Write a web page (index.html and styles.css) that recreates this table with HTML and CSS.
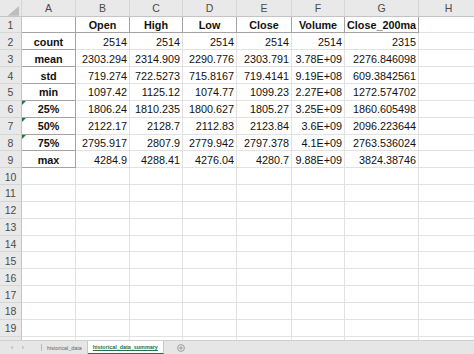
FILE: index.html
```html
<!DOCTYPE html>
<html>
<head>
<meta charset="utf-8">
<link rel="stylesheet" href="styles.css">
</head>
<body>
<div class="app">
  <div class="sheet">
    <div class="hd corner"><svg width="22" height="17" viewBox="0 0 22 17"><polygon points="20,6 20,16 8,16" fill="#bdbdbd"/></svg></div>
    <div class="hd">A</div><div class="hd">B</div><div class="hd">C</div><div class="hd">D</div><div class="hd">E</div><div class="hd">F</div><div class="hd">G</div><div class="hd">H</div>

    <div class="rh">1</div><div class="c a1"></div><div class="c b t">Open</div><div class="c b t">High</div><div class="c b t">Low</div><div class="c b t">Close</div><div class="c b t">Volume</div><div class="c b t">Close_200ma</div><div class="c"></div>

    <div class="rh">2</div><div class="c b t">count</div><div class="c n">2514</div><div class="c n">2514</div><div class="c n">2514</div><div class="c n">2514</div><div class="c n">2514</div><div class="c n">2315</div><div class="c"></div>

    <div class="rh">3</div><div class="c b t">mean</div><div class="c n">2303.294</div><div class="c n">2314.909</div><div class="c n">2290.776</div><div class="c n">2303.791</div><div class="c n">3.78E+09</div><div class="c n">2276.846098</div><div class="c"></div>

    <div class="rh">4</div><div class="c b t">std</div><div class="c n">719.274</div><div class="c n">722.5273</div><div class="c n">715.8167</div><div class="c n">719.4141</div><div class="c n">9.19E+08</div><div class="c n">609.3842561</div><div class="c"></div>

    <div class="rh">5</div><div class="c b t">min</div><div class="c n">1097.42</div><div class="c n">1125.12</div><div class="c n">1074.77</div><div class="c n">1099.23</div><div class="c n">2.27E+08</div><div class="c n">1272.574702</div><div class="c"></div>

    <div class="rh">6</div><div class="c b t warn">25%</div><div class="c n">1806.24</div><div class="c n">1810.235</div><div class="c n">1800.627</div><div class="c n">1805.27</div><div class="c n">3.25E+09</div><div class="c n">1860.605498</div><div class="c"></div>

    <div class="rh">7</div><div class="c b t warn">50%</div><div class="c n">2122.17</div><div class="c n">2128.7</div><div class="c n">2112.83</div><div class="c n">2123.84</div><div class="c n">3.6E+09</div><div class="c n">2096.223644</div><div class="c"></div>

    <div class="rh">8</div><div class="c b t warn">75%</div><div class="c n">2795.917</div><div class="c n">2807.9</div><div class="c n">2779.942</div><div class="c n">2797.378</div><div class="c n">4.1E+09</div><div class="c n">2763.536024</div><div class="c"></div>

    <div class="rh">9</div><div class="c b t">max</div><div class="c n">4284.9</div><div class="c n">4288.41</div><div class="c n">4276.04</div><div class="c n">4280.7</div><div class="c n">9.88E+09</div><div class="c n">3824.38746</div><div class="c"></div>

    <div class="rh">10</div><div class="c"></div><div class="c"></div><div class="c"></div><div class="c"></div><div class="c"></div><div class="c"></div><div class="c"></div><div class="c"></div>
    <div class="rh">11</div><div class="c"></div><div class="c"></div><div class="c"></div><div class="c"></div><div class="c"></div><div class="c"></div><div class="c"></div><div class="c"></div>
    <div class="rh">12</div><div class="c"></div><div class="c"></div><div class="c"></div><div class="c"></div><div class="c"></div><div class="c"></div><div class="c"></div><div class="c"></div>
    <div class="rh">13</div><div class="c"></div><div class="c"></div><div class="c"></div><div class="c"></div><div class="c"></div><div class="c"></div><div class="c"></div><div class="c"></div>
    <div class="rh">14</div><div class="c"></div><div class="c"></div><div class="c"></div><div class="c"></div><div class="c"></div><div class="c"></div><div class="c"></div><div class="c"></div>
    <div class="rh">15</div><div class="c"></div><div class="c"></div><div class="c"></div><div class="c"></div><div class="c"></div><div class="c"></div><div class="c"></div><div class="c"></div>
    <div class="rh">16</div><div class="c"></div><div class="c"></div><div class="c"></div><div class="c"></div><div class="c"></div><div class="c"></div><div class="c"></div><div class="c"></div>
    <div class="rh">17</div><div class="c"></div><div class="c"></div><div class="c"></div><div class="c"></div><div class="c"></div><div class="c"></div><div class="c"></div><div class="c"></div>
    <div class="rh">18</div><div class="c"></div><div class="c"></div><div class="c"></div><div class="c"></div><div class="c"></div><div class="c"></div><div class="c"></div><div class="c"></div>
    <div class="rh">19</div><div class="c"></div><div class="c"></div><div class="c"></div><div class="c"></div><div class="c"></div><div class="c"></div><div class="c"></div><div class="c"></div>
    <div class="rh"></div><div class="c"></div><div class="c"></div><div class="c"></div><div class="c"></div><div class="c"></div><div class="c"></div><div class="c"></div><div class="c"></div>
  </div>
  <div class="tabs">
    <span class="nav"><svg width="30" height="13" viewBox="0 0 30 13"><polygon points="13,4.5 13,8.5 10.5,6.5" fill="#c4c4c4"/><polygon points="22,4.5 22,8.5 24.5,6.5" fill="#c4c4c4"/></svg></span>
    <span class="sep"></span>
    <span class="tab">historical_data</span>
    <span class="tab active">historical_data_summary</span>
    <span class="add"><svg width="8" height="8" viewBox="0 0 8 8"><circle cx="4" cy="4" r="3.4" fill="none" stroke="#8a8a8a" stroke-width="0.8"/><path d="M4 2.2V5.8M2.2 4H5.8" stroke="#8a8a8a" stroke-width="0.8"/></svg></span>
  </div>
</div>
</body>
</html>
```

FILE: styles.css
```css
html, body {
  margin: 0;
  padding: 0;
  background: #ffffff;
}
.app {
  width: 474px;
  height: 354px;
  overflow: hidden;
  display: flex;
  flex-direction: column;
  font-family: "Liberation Sans", Arial, sans-serif;
}
.sheet {
  height: 340px;
  overflow: hidden;
  display: grid;
  grid-template-columns: 22px 54px 54px 53px 54px 55px 53px 74px 60px;
  grid-template-rows: 16.6px repeat(20, 16.85px);
  flex: none;
}
.hd {
  background: #e9e9e9;
  border-right: 1px solid #d6d6d6;
  border-bottom: 1px solid #c4c4c4;
  color: #4a4a4a;
  font-size: 10.5px;
  display: flex;
  align-items: center;
  justify-content: center;
  padding-top: 1px;
  box-sizing: border-box;
}
.corner {
  padding: 0;
  align-items: stretch;
  justify-content: stretch;
}
.corner svg {
  display: block;
}
.rh {
  background: #e9e9e9;
  border-right: 1px solid #c4c4c4;
  border-bottom: 1px solid #d6d6d6;
  color: #4a4a4a;
  font-size: 10.5px;
  display: flex;
  align-items: center;
  justify-content: center;
  padding-top: 1px;
  box-sizing: border-box;
}
.c {
  border-right: 1px solid #e2e2e2;
  border-bottom: 1px solid #e2e2e2;
  box-sizing: border-box;
  font-size: 10.8px;
  color: #111;
  display: flex;
  align-items: center;
  padding: 1px 2px 0 2px;
  white-space: nowrap;
  overflow: visible;
  position: relative;
}
.n {
  justify-content: flex-end;
}
.b {
  font-weight: bold;
  justify-content: center;
}
.t {
  border-right-color: #a3a3a3;
  border-bottom-color: #a3a3a3;
}
.a1 {
  border-right-color: #a3a3a3;
  border-bottom-color: #a3a3a3;
}
.warn::before {
  content: "";
  position: absolute;
  left: 0;
  top: 0;
  border-top: 4px solid #1f7a3f;
  border-right: 4px solid transparent;
}
.tabs {
  flex: 1;
  background: #e6e6e6;
  border-top: 1px solid #cfcfcf;
  display: flex;
  align-items: stretch;
  font-size: 5.4px;
  color: #666;
}
.nav {
  display: flex;
  align-items: center;
  width: 41px;
}
.nav svg {
  display: block;
}
.sep {
  width: 1px;
  background: #b8b8b8;
  margin: 3px 0;
}
.tab {
  display: flex;
  align-items: center;
  padding: 0 5px;
  border-right: 1px solid #c8c8c8;
}
.tab.active {
  background: #ffffff;
  color: #217346;
  font-weight: bold;
  text-decoration: underline;
  border-bottom: 1px solid #217346;
  box-sizing: border-box;
  padding: 0 5px;
}
.add {
  display: flex;
  align-items: center;
  margin-left: 13px;
}
.add svg {
  display: block;
}
```
